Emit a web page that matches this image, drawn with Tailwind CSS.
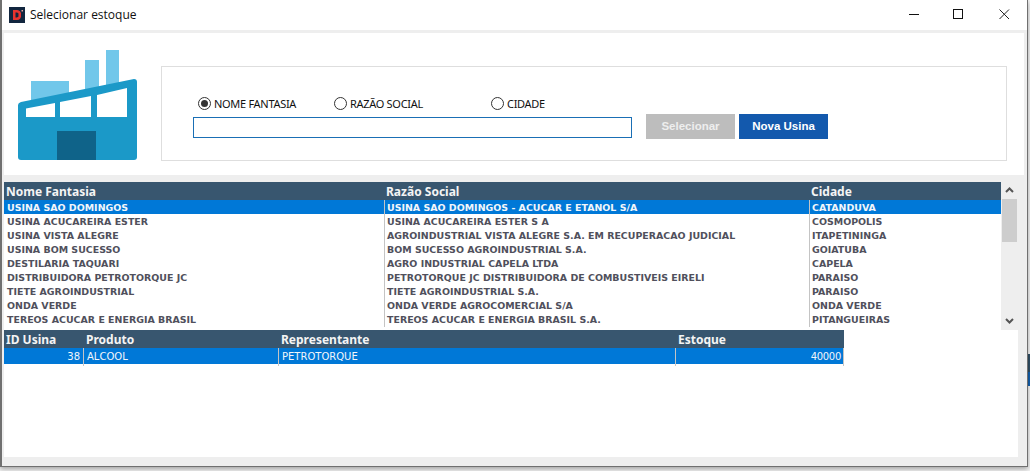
<!DOCTYPE html>
<html lang="en">
<head>
    <meta charset="UTF-8">
    <title>Selecionar estoque</title>
    <script src="https://cdn.jsdelivr.net/npm/@tailwindcss/browser@4"></script>
</head>
<body class="w-[1030px] h-[471px] overflow-hidden bg-[#f4f4f4] relative">
    <!-- app peeking out behind the window -->
    <div class="absolute left-[1028px] top-[354px] w-[2px] h-[18px] bg-[#2f4f66]"></div>
    <div class="absolute left-[1028px] top-[372px] w-[2px] h-[14px] bg-[#1361b0]"></div>

    <div class="relative w-[1028px] h-[467px] flex flex-col bg-[#eeeeee] border-l-2 border-r border-b border-[#707070] shadow-[0_2px_5px_rgba(0,0,0,0.35)] font-['Noto_Sans',sans-serif]">
        <!-- Title bar -->
        <div class="h-[30px] shrink-0 bg-white flex items-center pl-[7px]">
            <svg width="16" height="16" viewBox="0 0 16 16" class="mb-[1px]">
                <rect width="16" height="16" fill="#12263f"/>
                <path d="M4 3h4a4 4 0 0 1 4 5 4 4 0 0 1-4 5H4z M6.500 5.500v5H8a2 2 0 0 0 1.500-2.500A2 2 0 0 0 8 5.500z" fill="#e8322e" fill-rule="evenodd"/>
                <rect x="12.500" y="3" width="1.500" height="1.500" fill="#e8a09e"/>
            </svg>
            <span class="ml-[5px] text-[12px] text-[#111] font-['Open_Sans',sans-serif]">Selecionar estoque</span>
            <div class="ml-auto flex items-center">
                <svg width="46" height="30" viewBox="0 0 46 30"><path d="M20 14.500h10" stroke="#111" fill="none"/></svg>
                <svg width="46" height="30" viewBox="0 0 46 30"><rect x="18.500" y="9.500" width="9" height="9" stroke="#111" fill="none"/></svg>
                <svg width="46" height="30" viewBox="0 0 46 30"><path d="M18.500 9.500l9.500 9.500M28 9.500l-9.500 9.500" stroke="#222" fill="none"/></svg>
            </div>
        </div>

        <!-- Search area -->
        <div class="mt-[3px] ml-[2px] mr-[3px] h-[142px] shrink-0 bg-white flex">
            <div class="w-[157px] shrink-0">
                <svg width="157" height="142" viewBox="0 0 157 142">
                    <g transform="translate(-4 -33)">
                        <rect x="31" y="81" width="38" height="24" fill="#71c7ea"/>
                        <rect x="85" y="60" width="14" height="32" fill="#71c7ea"/>
                        <rect x="106" y="50" width="13" height="38" fill="#71c7ea"/>
                        <path d="M21 102L134 79Q137 79 137 82V157Q137 160 134 160H21Q18 160 18 157V105Q18 103 21 102Z" fill="#1b99c8"/>
                        <path d="M26 108.500L55 103V117H26Z M60 102V117H91V96Z M97 95V117H127V88Z" fill="#fff"/>
                        <rect x="57" y="131" width="39" height="29" fill="#0f6389"/>
                    </g>
                </svg>
            </div>
            <div class="mt-[33px] w-[846px] h-[95px] border border-[#dedede] pl-[31px] pt-[30px] flex flex-col">
                <div class="flex items-center h-[13px] text-[11px] tracking-[-0.3px] text-[#111]">
                    <label class="w-[141px] pl-[5px] flex items-center gap-[3px]">
                        <span class="w-[13px] h-[13px] rounded-full border border-[#333] flex items-center justify-center"><span class="w-[7px] h-[7px] rounded-full bg-[#333]"></span></span>
                        <span class="mt-[1px]">NOME FANTASIA</span>
                    </label>
                    <label class="w-[157px] flex items-center gap-[3px]">
                        <span class="w-[13px] h-[13px] rounded-full border border-[#333]"></span>
                        <span class="mt-[1px]">RAZÃO SOCIAL</span>
                    </label>
                    <label class="flex items-center gap-[3px]">
                        <span class="w-[13px] h-[13px] rounded-full border border-[#333]"></span>
                        <span class="mt-[1px]">CIDADE</span>
                    </label>
                </div>
                <div class="flex mt-[4px] items-start">
                    <input type="text" class="w-[439px] h-[21px] mt-[3px] border border-[#1a6fb5] bg-white outline-none">
                    <button class="ml-[14px] w-[89px] h-[25px] bg-[#bdbdbd] text-[#eeeeee] text-[11.500px] font-bold font-['Liberation_Sans',sans-serif]">Selecionar</button>
                    <button class="ml-[4px] w-[89px] h-[25px] bg-[#1359ad] text-white text-[11.500px] font-bold font-['Liberation_Sans',sans-serif]">Nova Usina</button>
                </div>
            </div>
        </div>

        <!-- Usinas grid -->
        <div class="mt-[7px] ml-[2px] flex h-[148px] shrink-0 font-['DejaVu_Sans',sans-serif]">
            <div class="w-[997px] bg-white">
                <div class="h-[18px] bg-[#38566f] grid grid-cols-[380px_425px_192px] items-center pl-[2px] text-[12px] font-bold text-[#f4f4f4] leading-[19px] font-['Noto_Sans',sans-serif]">
                    <span>Nome Fantasia</span><span>Razão Social</span><span>Cidade</span>
                </div>
                <div class="text-[9.450px] font-bold text-[#50505c] leading-[15px]">
                    <div class="h-[14px] grid grid-cols-[380px_425px_192px] bg-[#0078d7] text-[#f2f6fa]">
                        <span class="pl-[3px]">USINA SAO DOMINGOS</span><span class="pl-[2px] border-l border-[#c4c4c4]">USINA SAO DOMINGOS - ACUCAR E ETANOL S/A</span><span class="pl-[2px] border-l border-[#c4c4c4]">CATANDUVA</span>
                    </div>
                    <div class="h-[14px] grid grid-cols-[380px_425px_192px]">
                        <span class="pl-[3px]">USINA ACUCAREIRA ESTER</span><span class="pl-[2px] border-l border-[#c4c4c4]">USINA ACUCAREIRA ESTER S A</span><span class="pl-[2px] border-l border-[#c4c4c4]">COSMOPOLIS</span>
                    </div>
                    <div class="h-[14px] grid grid-cols-[380px_425px_192px]">
                        <span class="pl-[3px]">USINA VISTA ALEGRE</span><span class="pl-[2px] border-l border-[#c4c4c4]">AGROINDUSTRIAL VISTA ALEGRE S.A. EM RECUPERACAO JUDICIAL</span><span class="pl-[2px] border-l border-[#c4c4c4]">ITAPETININGA</span>
                    </div>
                    <div class="h-[14px] grid grid-cols-[380px_425px_192px]">
                        <span class="pl-[3px]">USINA BOM SUCESSO</span><span class="pl-[2px] border-l border-[#c4c4c4]">BOM SUCESSO AGROINDUSTRIAL S.A.</span><span class="pl-[2px] border-l border-[#c4c4c4]">GOIATUBA</span>
                    </div>
                    <div class="h-[14px] grid grid-cols-[380px_425px_192px]">
                        <span class="pl-[3px]">DESTILARIA TAQUARI</span><span class="pl-[2px] border-l border-[#c4c4c4]">AGRO INDUSTRIAL CAPELA LTDA</span><span class="pl-[2px] border-l border-[#c4c4c4]">CAPELA</span>
                    </div>
                    <div class="h-[14px] grid grid-cols-[380px_425px_192px]">
                        <span class="pl-[3px]">DISTRIBUIDORA PETROTORQUE JC</span><span class="pl-[2px] border-l border-[#c4c4c4]">PETROTORQUE JC DISTRIBUIDORA DE COMBUSTIVEIS EIRELI</span><span class="pl-[2px] border-l border-[#c4c4c4]">PARAISO</span>
                    </div>
                    <div class="h-[14px] grid grid-cols-[380px_425px_192px]">
                        <span class="pl-[3px]">TIETE AGROINDUSTRIAL</span><span class="pl-[2px] border-l border-[#c4c4c4]">TIETE AGROINDUSTRIAL S.A.</span><span class="pl-[2px] border-l border-[#c4c4c4]">PARAISO</span>
                    </div>
                    <div class="h-[14px] grid grid-cols-[380px_425px_192px]">
                        <span class="pl-[3px]">ONDA VERDE</span><span class="pl-[2px] border-l border-[#c4c4c4]">ONDA VERDE AGROCOMERCIAL S/A</span><span class="pl-[2px] border-l border-[#c4c4c4]">ONDA VERDE</span>
                    </div>
                    <div class="h-[14px] grid grid-cols-[380px_425px_192px]">
                        <span class="pl-[3px]">TEREOS ACUCAR E ENERGIA BRASIL</span><span class="pl-[2px] border-l border-[#c4c4c4]">TEREOS ACUCAR E ENERGIA BRASIL S.A.</span><span class="pl-[2px] border-l border-[#c4c4c4]">PITANGUEIRAS</span>
                    </div>
                </div>
            </div>
            <!-- Scrollbar -->
            <div class="ml-[1px] w-[15px] flex flex-col items-center">
                <svg width="15" height="17" viewBox="0 0 15 17"><path d="M4 10l3.500-3.500L11 10" stroke="#555" stroke-width="2" fill="none"/></svg>
                <div class="w-[15px] h-[43px] bg-[#cdcdcd]"></div>
                <svg class="mt-auto mb-[1px]" width="15" height="17" viewBox="0 0 15 17"><path d="M4 7l3.500 3.500L11 7" stroke="#555" stroke-width="2" fill="none"/></svg>
            </div>
        </div>

        <!-- Estoque grid -->
        <div class="ml-[2px] mr-[9px] h-[127px] shrink-0 bg-white font-['DejaVu_Sans',sans-serif]">
            <div class="w-[840px] h-[18px] bg-[#38566f] grid grid-cols-[79px_195px_397px_169px] items-center text-[12px] font-bold text-[#f4f4f4] leading-[19px] font-['Noto_Sans',sans-serif]">
                <span class="pl-[2px]">ID Usina</span><span class="pl-[3px]">Produto</span><span class="pl-[3px]">Representante</span><span class="pl-[3px]">Estoque</span>
            </div>
            <div class="w-[840px] h-[16px] bg-[#0078d7] grid grid-cols-[79px_195px_397px_169px] text-[10px] text-[#f2f6fa] leading-[18px]">
                <span class="text-right pr-[3px]">38</span><span class="pl-[3px] border-l border-[#c4c4c4]">ALCOOL</span><span class="pl-[3px] border-l border-[#c4c4c4]">PETROTORQUE</span><span class="text-right pr-[2px] border-l border-r border-[#c4c4c4] tracking-[-0.3px]">40000</span>
            </div>
        </div>
    </div>
</body>
</html>
